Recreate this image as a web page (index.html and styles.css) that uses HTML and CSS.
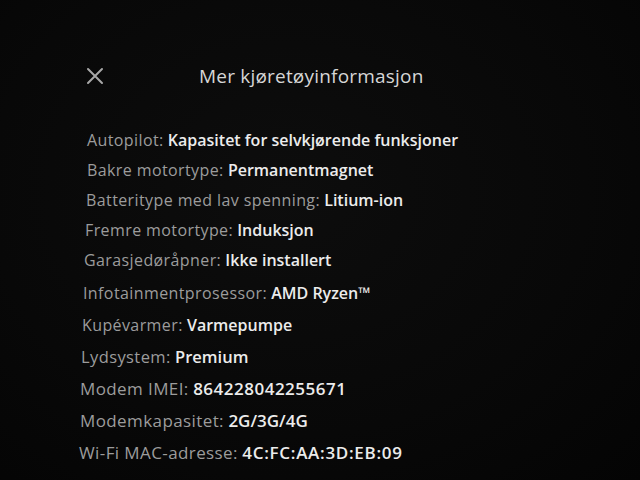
FILE: index.html
```html
<!DOCTYPE html>
<html lang="no">
<head>
<meta charset="utf-8">
<title>Mer kjøretøyinformasjon</title>
<link rel="stylesheet" href="styles.css">
</head>
<body>
<div class="screen">
  <header class="header">
    <button class="close" aria-label="Lukk">
      <svg width="18" height="18" viewBox="0 0 18 18"><path d="M2 2 L16 16 M16 2 L2 16" stroke="#a8a8a8" stroke-width="2" stroke-linecap="round" fill="none"/></svg>
    </button>
    <h1 class="title">Mer kjøretøyinformasjon</h1>
  </header>
  <ul class="list">
    <li class="row"><span class="label">Autopilot:</span> <span class="value">Kapasitet for selvkjørende funksjoner</span></li>
    <li class="row"><span class="label">Bakre motortype:</span> <span class="value">Permanentmagnet</span></li>
    <li class="row"><span class="label">Batteritype med lav spenning:</span> <span class="value">Litium-ion</span></li>
    <li class="row"><span class="label">Fremre motortype:</span> <span class="value">Induksjon</span></li>
    <li class="row"><span class="label">Garasjedøråpner:</span> <span class="value">Ikke installert</span></li>
    <li class="row"><span class="label">Infotainmentprosessor:</span> <span class="value">AMD Ryzen™</span></li>
    <li class="row"><span class="label">Kupévarmer:</span> <span class="value">Varmepumpe</span></li>
    <li class="row"><span class="label">Lydsystem:</span> <span class="value">Premium</span></li>
    <li class="row"><span class="label">Modem IMEI:</span> <span class="value num">864228042255671</span></li>
    <li class="row"><span class="label">Modemkapasitet:</span> <span class="value">2G/3G/4G</span></li>
    <li class="row"><span class="label">Wi-Fi MAC-adresse:</span> <span class="value num wide">4C:FC:AA:3D:EB:09</span></li>
  </ul>
</div>
</body>
</html>
```

FILE: styles.css
```css
html, body {
  margin: 0;
  padding: 0;
  background: #080808;
}
.screen {
  width: 640px;
  height: 480px;
  overflow: hidden;
  background: radial-gradient(ellipse at 45% 40%, #0d0d0d 0%, #080808 60%, #040404 100%);
  font-family: "Open Sans", "Liberation Sans", sans-serif;
  box-sizing: border-box;
  padding-top: 60px;
}
.header {
  display: flex;
  align-items: center;
  height: 32px;
  padding-left: 86px;
}
.close {
  width: 18px;
  height: 18px;
  padding: 0;
  border: 0;
  background: none;
  display: flex;
}
.title {
  margin: 0 0 0 95px;
  font-size: 19px;
  font-weight: 500;
  color: #d6d6d6;
  letter-spacing: 0.2px;
}
.list {
  list-style: none;
  margin: 0;
  padding: 0;
  margin-top: 33px;
}
.row {
  height: 30px;
  line-height: 30px;
  font-size: 16px;
  padding-left: 87px;
  white-space: nowrap;
}
.row:nth-child(n+6) { height: 32px; line-height: 32px; }
.row:nth-child(2) { padding-left: 87px; }
.row:nth-child(3) { padding-left: 86px; }
.row:nth-child(4) { padding-left: 85px; }
.row:nth-child(5) { padding-left: 84px; }
.row:nth-child(6) { padding-left: 83px; margin-top: 2px; }
.row:nth-child(7) { padding-left: 82px; }
.row:nth-child(8) { padding-left: 81px; font-size: 16.5px; }
.row:nth-child(9) { padding-left: 80px; font-size: 17px; }
.row:nth-child(10) { padding-left: 80px; font-size: 17px; }
.row:nth-child(11) { padding-left: 79px; font-size: 17px; }
.label {
  color: #9c9c9c;
  letter-spacing: 0.4px;
}
.value {
  color: #ececec;
  font-weight: 600;
}
.value.num {
  letter-spacing: 0.5px;
}
.value.wide {
  letter-spacing: 0.7px;
}
```
